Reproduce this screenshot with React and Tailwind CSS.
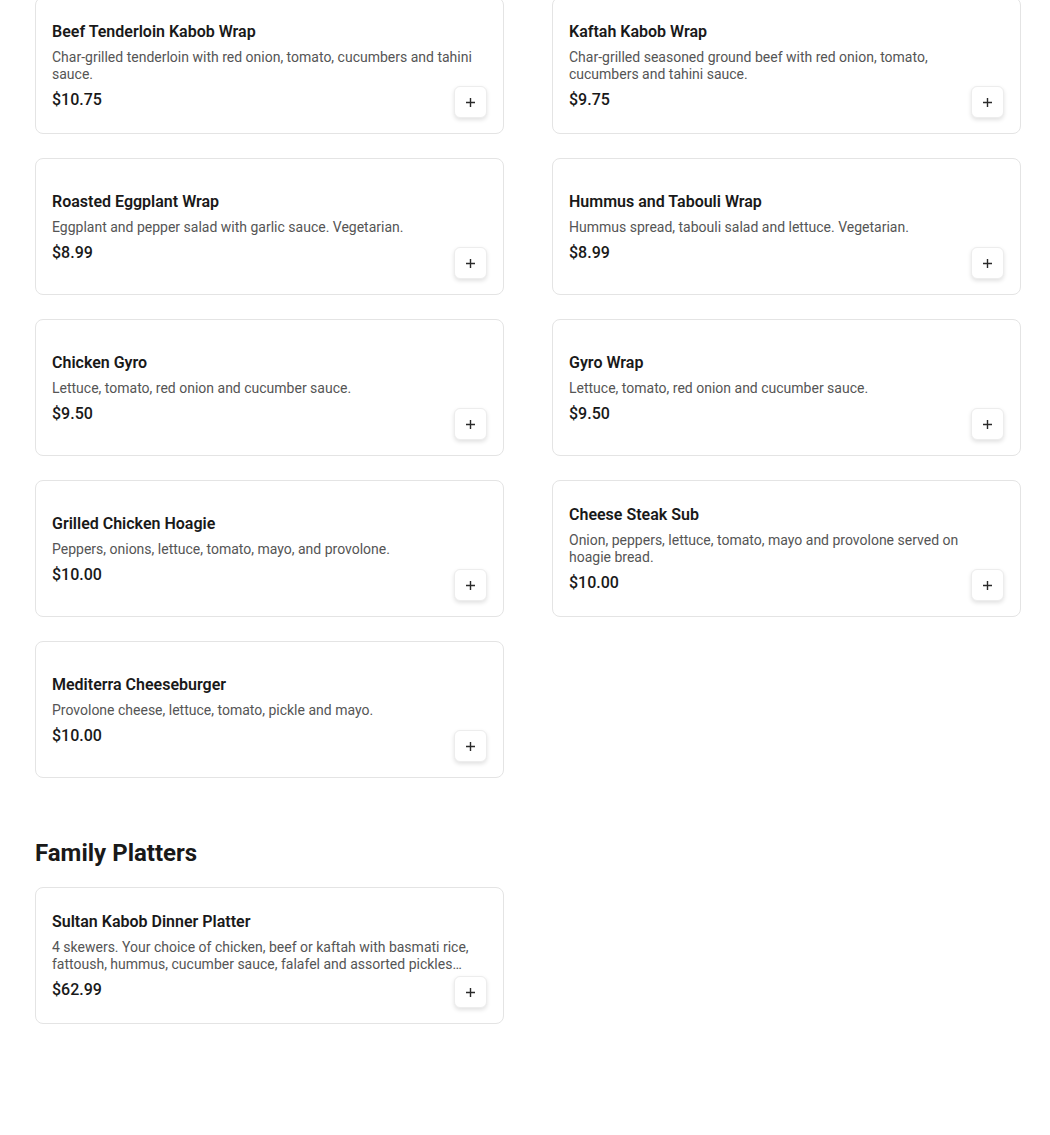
const wraps = [
  { name: "Beef Tenderloin Kabob Wrap", desc: "Char-grilled tenderloin with red onion, tomato, cucumbers and tahini sauce.", price: "$10.75" },
  { name: "Kaftah Kabob Wrap", desc: "Char-grilled seasoned ground beef with red onion, tomato, cucumbers and tahini sauce.", price: "$9.75" },
  { name: "Roasted Eggplant Wrap", desc: "Eggplant and pepper salad with garlic sauce. Vegetarian.", price: "$8.99" },
  { name: "Hummus and Tabouli Wrap", desc: "Hummus spread, tabouli salad and lettuce. Vegetarian.", price: "$8.99" },
  { name: "Chicken Gyro", desc: "Lettuce, tomato, red onion and cucumber sauce.", price: "$9.50" },
  { name: "Gyro Wrap", desc: "Lettuce, tomato, red onion and cucumber sauce.", price: "$9.50" },
  { name: "Grilled Chicken Hoagie", desc: "Peppers, onions, lettuce, tomato, mayo, and provolone.", price: "$10.00" },
  { name: "Cheese Steak Sub", desc: "Onion, peppers, lettuce, tomato, mayo and provolone served on hoagie bread.", price: "$10.00" },
  { name: "Mediterra Cheeseburger", desc: "Provolone cheese, lettuce, tomato, pickle and mayo.", price: "$10.00" },
];

const platters = [
  {
    name: "Sultan Kabob Dinner Platter",
    desc: "4 skewers. Your choice of chicken, beef or kaftah with basmati rice, fattoush, hummus, cucumber sauce, falafel and assorted pickles and garlic sauce.",
    price: "$62.99",
  },
];

function PlusButton() {
  // sits over the card's bottom-right corner
  return (
    <button className="absolute bottom-[15px] right-[16px] flex h-[32px] w-[33px] items-center justify-center rounded-[6px] border border-[#ededed] bg-white shadow-[0_2px_4px_rgba(0,0,0,0.12)]">
      <svg width="11" height="11" viewBox="0 0 11 11" fill="none">
        <path d="M5.5 1v9M1 5.5h9" stroke="#2a2a2a" strokeWidth="1.4" />
      </svg>
    </button>
  );
}

function ItemCard({ item }) {
  return (
    <div className="relative flex h-[137px] rounded-[8px] border border-[#e4e4e4] bg-white px-[16px] py-[15px]">
      <div className="flex flex-1 flex-col justify-center pr-[10px] pt-[1px]">
        <div className="text-[16px] font-semibold leading-[20px] text-[#191919]">{item.name}</div>
        <div className="mt-[7px] line-clamp-2 text-[14px] leading-[17px] text-[#555555]">{item.desc}</div>
        <div className="mt-[7px] text-[16px] font-medium leading-[20px] text-[#191919]">{item.price}</div>
      </div>
      <PlusButton />
    </div>
  );
}

export default function App() {
  return (
    <div className="min-h-[1135px] bg-white px-[35px] pb-[100px]" style={{ fontFamily: "Roboto, 'Liberation Sans', sans-serif" }}>
      <div className="-mt-[3px] grid w-[986px] grid-cols-2 gap-x-[48px] gap-y-[24px]">
        {wraps.map((item) => (
          <ItemCard key={item.name} item={item} />
        ))}
      </div>

      <h2 className="mt-[60px] text-[24px] font-bold leading-[30px] text-[#191919]">Family Platters</h2>

      <div className="mt-[19px] grid w-[986px] grid-cols-2 gap-x-[48px] gap-y-[24px]">
        {platters.map((item) => (
          <ItemCard key={item.name} item={item} />
        ))}
      </div>
    </div>
  );
}
